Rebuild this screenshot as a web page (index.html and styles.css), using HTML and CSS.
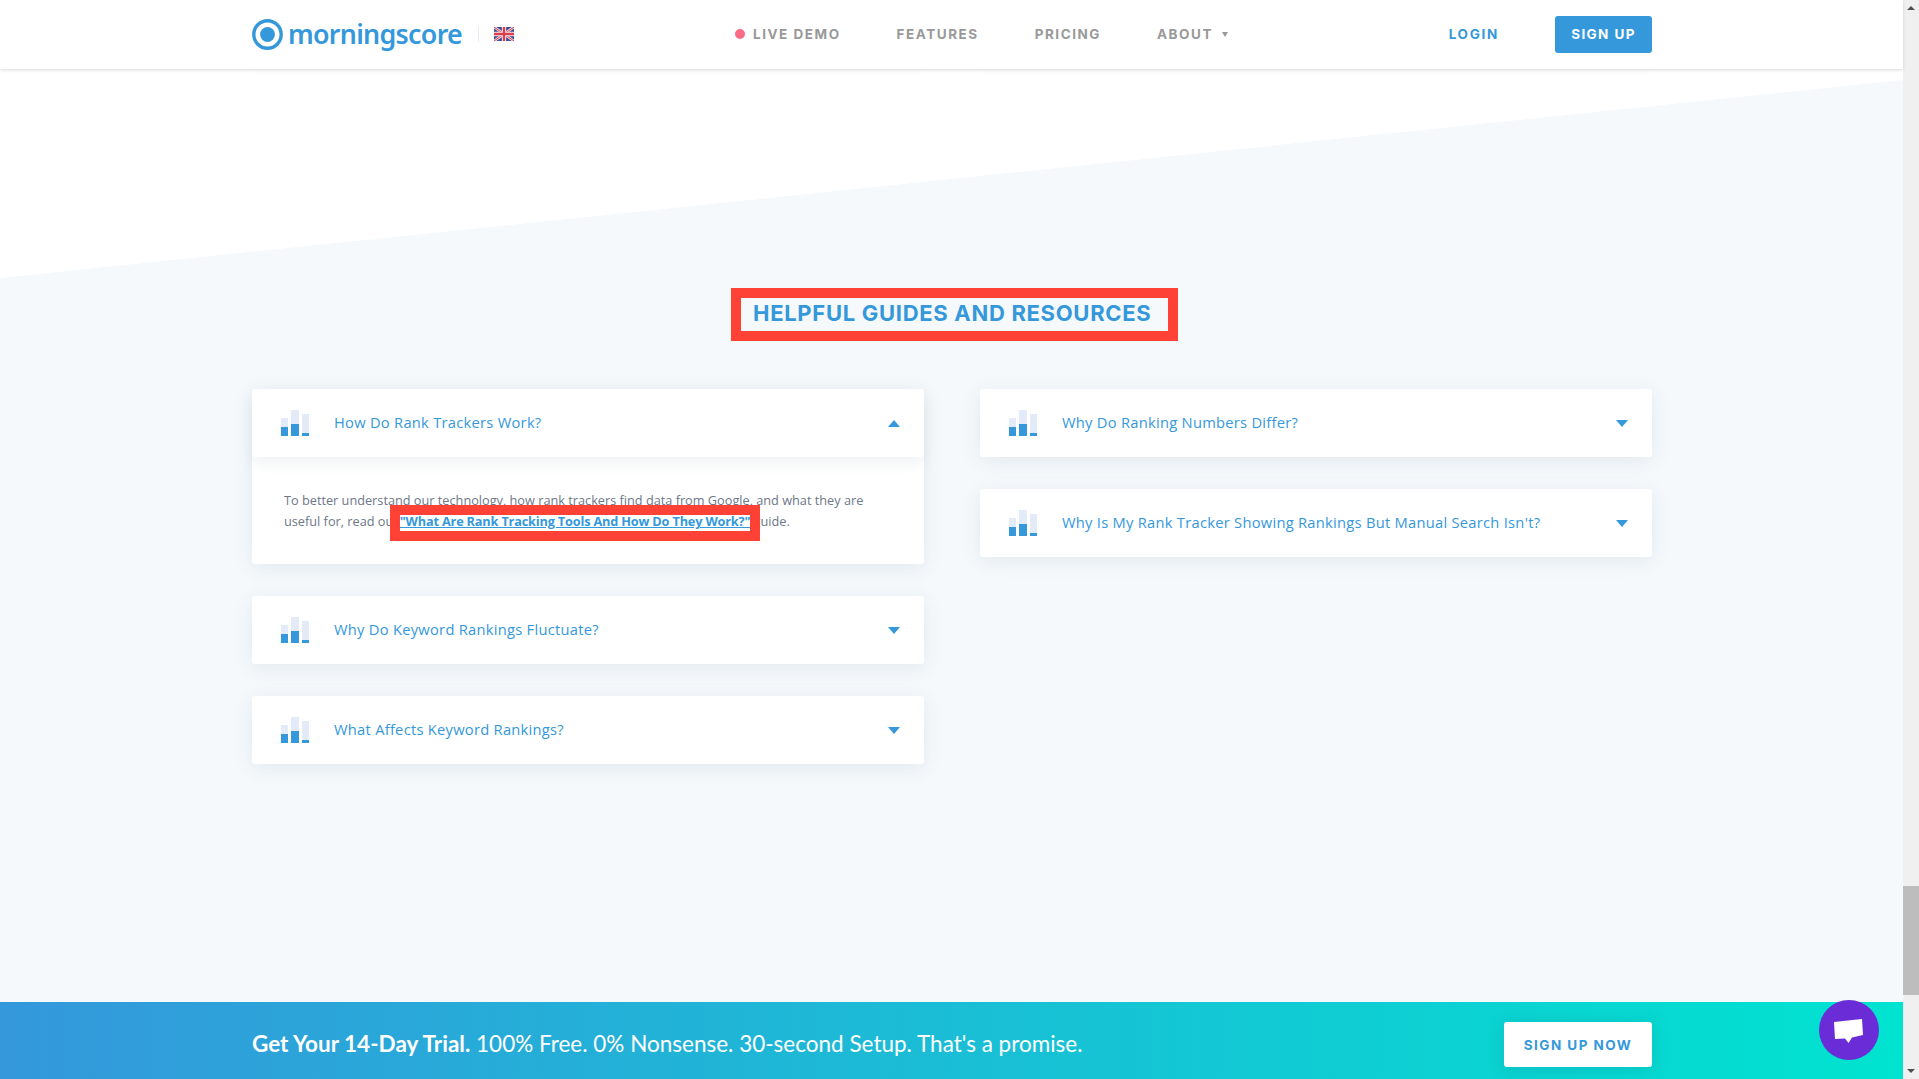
FILE: index.html
```html
<!DOCTYPE html>
<html lang="en">
<head>
<meta charset="utf-8">
<title>Morningscore</title>
<link rel="stylesheet" href="styles.css">
</head>
<body>
<div class="window">
  <div class="viewport">
    <header class="topbar">
      <div class="wrap topbar-in">
        <a class="logo" href="#">
          <svg class="logo-mark" viewBox="0 0 31 31" aria-hidden="true"><circle cx="15.5" cy="15.5" r="13.7" fill="none" stroke="#3498db" stroke-width="3.4"/><circle cx="15.5" cy="15.5" r="7.4" fill="#3498db"/></svg>
          <span class="logo-text">morningscore</span>
        </a>
        <span class="divider"></span>
        <svg class="flag" viewBox="0 0 20 14" aria-hidden="true">
          <rect width="20" height="14" fill="#3f4a94"/>
          <path d="M0 0 20 14M20 0 0 14" stroke="#f3d9e0" stroke-width="2.6"/>
          <path d="M0 0 20 14M20 0 0 14" stroke="#d9414f" stroke-width="1"/>
          <path d="M10 0V14M0 7H20" stroke="#f6e6ea" stroke-width="4.4"/>
          <path d="M10 0V14M0 7H20" stroke="#d9414f" stroke-width="2.4"/>
        </svg>
        <nav class="nav">
          <a class="nav-link live" href="#"><span class="dot"></span>LIVE DEMO</a>
          <a class="nav-link" href="#">FEATURES</a>
          <a class="nav-link" href="#">PRICING</a>
          <a class="nav-link" href="#">ABOUT<span class="caret"></span></a>
        </nav>
        <a class="login" href="#">LOGIN</a>
        <a class="signup" href="#">SIGN UP</a>
      </div>
    </header>

    <main class="main">
      <div class="prev-row wrap"><span></span><span></span></div>
      <div class="wrap content">
        <h2 class="heading">HELPFUL GUIDES AND RESOURCES</h2>
        <div class="columns">
          <div class="col">
            <section class="card">
              <div class="card-head open">
                <svg class="bars" viewBox="0 0 28 26" aria-hidden="true"><path fill="#e3eaf8" d="M0 8h7v18H0zM10 0h8v26h-8zM21 4h7v22h-7z"/><path fill="#3498db" d="M0 17h7v9H0zM10 14h8v12h-8zM21 23h7v3h-7z"/></svg>
                <span class="card-title">How Do Rank Trackers Work?</span>
                <span class="tri up"></span>
              </div>
              <p class="card-body">To better understand our technology, how rank trackers find data from Google, and what they are useful for, read our <a class="guide" href="#">"What Are Rank Tracking Tools And How Do They Work?"</a> guide.</p>
            </section>
            <section class="card">
              <div class="card-head">
                <svg class="bars" viewBox="0 0 28 26" aria-hidden="true"><path fill="#e3eaf8" d="M0 8h7v18H0zM10 0h8v26h-8zM21 4h7v22h-7z"/><path fill="#3498db" d="M0 17h7v9H0zM10 14h8v12h-8zM21 23h7v3h-7z"/></svg>
                <span class="card-title">Why Do Keyword Rankings Fluctuate?</span>
                <span class="tri"></span>
              </div>
            </section>
            <section class="card">
              <div class="card-head">
                <svg class="bars" viewBox="0 0 28 26" aria-hidden="true"><path fill="#e3eaf8" d="M0 8h7v18H0zM10 0h8v26h-8zM21 4h7v22h-7z"/><path fill="#3498db" d="M0 17h7v9H0zM10 14h8v12h-8zM21 23h7v3h-7z"/></svg>
                <span class="card-title">What Affects Keyword Rankings?</span>
                <span class="tri"></span>
              </div>
            </section>
          </div>
          <div class="col">
            <section class="card">
              <div class="card-head">
                <svg class="bars" viewBox="0 0 28 26" aria-hidden="true"><path fill="#e3eaf8" d="M0 8h7v18H0zM10 0h8v26h-8zM21 4h7v22h-7z"/><path fill="#3498db" d="M0 17h7v9H0zM10 14h8v12h-8zM21 23h7v3h-7z"/></svg>
                <span class="card-title">Why Do Ranking Numbers Differ?</span>
                <span class="tri"></span>
              </div>
            </section>
            <section class="card">
              <div class="card-head">
                <svg class="bars" viewBox="0 0 28 26" aria-hidden="true"><path fill="#e3eaf8" d="M0 8h7v18H0zM10 0h8v26h-8zM21 4h7v22h-7z"/><path fill="#3498db" d="M0 17h7v9H0zM10 14h8v12h-8zM21 23h7v3h-7z"/></svg>
                <span class="card-title">Why Is My Rank Tracker Showing Rankings But Manual Search Isn't?</span>
                <span class="tri"></span>
              </div>
            </section>
          </div>
        </div>
      </div>
    </main>

    <footer class="cta">
      <div class="wrap cta-in">
        <p class="cta-text"><strong>Get Your 14-Day Trial.</strong> 100% Free. 0% Nonsense. 30-second Setup. That's a promise.</p>
        <a class="cta-btn" href="#">SIGN UP NOW</a>
      </div>
    </footer>
  </div>

  <div class="scrollbar">
    <span class="sb-arrow sb-up"></span>
    <div class="sb-track"><span class="sb-thumb"></span></div>
    <span class="sb-arrow sb-down"></span>
  </div>

  <button class="chat" type="button" aria-label="Open chat">
    <svg viewBox="0 0 30 26" aria-hidden="true"><path fill="#fff" d="M0 5 28 2 29 18 18 20.500 14.500 26 11 21.500 1 22z"/></svg>
  </button>
</div>
</body>
</html>
```

FILE: styles.css
```css
* { box-sizing: border-box; }
html, body { margin: 0; height: 100%; overflow: hidden; }
body { font-family: "Open Sans", "Liberation Sans", sans-serif; background: #fff; color: #6b7280; }
a { text-decoration: none; color: inherit; }

.window { position: relative; display: flex; height: 1079px; }
.viewport { flex: 1; min-width: 0; display: flex; flex-direction: column; }
.wrap { width: 1400px; margin-left: 252px; }

.topbar { position: relative; z-index: 2; height: 69px; flex: none; background: #fff; box-shadow: 0 1px 3px rgba(60, 70, 80, .2); }
.topbar-in { display: flex; align-items: center; height: 68px; }
.logo { display: flex; align-items: center; gap: 5px; color: #3498db; }
.logo-mark { width: 31px; height: 31px; display: block; }
.logo-text { font-family: "Noto Sans", sans-serif; font-size: 26.800px; font-weight: 600; letter-spacing: -.7px; line-height: 31px; width: 175px; white-space: nowrap; padding-bottom: 2px; }
.divider { width: 1px; height: 16px; background: #e4ebf5; margin-left: 15px; }
.flag { width: 20px; height: 14px; margin-left: 15px; display: block; }

.nav { display: flex; gap: 56px; margin-left: 221px; font: 700 13.500px "Inter", sans-serif; letter-spacing: 1.530px; color: #999; }
.nav-link { display: flex; align-items: center; }
.dot { width: 10px; height: 10px; border-radius: 50%; background: #fb6b87; margin-right: 8px; }
.caret { width: 0; height: 0; margin-left: 9px; border-left: 3px solid transparent; border-right: 3px solid transparent; border-top: 5px solid #999; }
.login { margin-left: auto; font: 700 13.500px "Inter", sans-serif; letter-spacing: 1.700px; color: #3498db; }
.signup { margin-left: 56px; width: 97px; height: 37px; display: flex; align-items: center; justify-content: center; border-radius: 3px; background: #3498db; color: #fff; font: 700 13.500px "Inter", sans-serif; letter-spacing: 1.400px; }

.main { position: relative; flex: 1; min-height: 0; }
.main::before { content: ""; position: absolute; left: 0; right: 0; top: 11px; bottom: 0; background: #f5f9fc; clip-path: polygon(0 198px, 100% 0, 100% 100%, 0 100%); }
.prev-row { position: relative; display: grid; grid-template-columns: 672px 672px; gap: 56px; height: 0; }
.prev-row span { height: 0; box-shadow: 0 2px 8px 1px rgba(40, 70, 100, .06); }
.content { position: relative; padding-top: 219px; display: flex; flex-direction: column; }

.heading { align-self: flex-start; margin: 0 0 48px 479px; width: 447px; height: 53px; border: 10px solid #ff4136; padding-left: 12px; background: #f5f9fc; color: #3498db; font: 700 22px/31px "Inter", sans-serif; letter-spacing: .7px; white-space: nowrap; }

.columns { display: grid; grid-template-columns: 672px 672px; gap: 56px; align-items: start; }
.col { display: flex; flex-direction: column; gap: 32px; }
.card { background: #fff; border-radius: 3px; box-shadow: 0 4px 20px rgba(40, 70, 100, .09); }
.card-head { display: flex; align-items: center; height: 68px; padding: 0 24px 0 29px; border-radius: 3px; }
.card-head.open { box-shadow: 0 6px 14px rgba(40, 70, 100, .07); position: relative; }
.bars { width: 28px; height: 26px; flex: none; }
.card-title { margin-left: 25px; flex: 1; padding-bottom: 2px; color: #3498db; font: 500 14.700px "Open Sans", sans-serif; letter-spacing: .27px; white-space: nowrap; }
.tri { width: 0; height: 0; border-left: 6px solid transparent; border-right: 6px solid transparent; border-top: 7px solid #3498db; }
.tri.up { border-top: 0; border-bottom: 7px solid #3498db; }
.card-body { margin: 0; height: 107px; padding: 33px 32px 0; font: 400 12.730px/21px "Open Sans", sans-serif; color: #6e7787; }
.guide { display: inline-block; height: 16px; line-height: 12px; color: #3498db; font-weight: 700; letter-spacing: -.17px; text-decoration: underline; background: #fff; outline: 10px solid #ff4136; margin-left: -2px; position: relative; }

.cta { flex: none; height: 77px; background: linear-gradient(90deg, #3498db 0%, #00e3d0 100%); }
.cta-in { display: flex; align-items: center; justify-content: space-between; height: 77px; padding-top: 8px; }
.cta-text { margin: 0; padding-bottom: 3px; color: #fff; font: 400 22.500px "Lato", sans-serif; white-space: nowrap; }
.cta-text strong { font-weight: 700; }
.cta-btn { width: 148px; height: 45px; display: flex; align-items: center; justify-content: center; border-radius: 3px; background: #fff; color: #3498db; font: 700 13.500px "Inter", sans-serif; letter-spacing: 1.450px; box-shadow: 0 2px 16px rgba(20, 120, 140, .25); }

.scrollbar { width: 16px; flex: none; background: #f0f0f0; display: flex; flex-direction: column; align-items: center; }
.sb-arrow { width: 0; height: 0; border-left: 4px solid transparent; border-right: 4px solid transparent; margin: 6px 0; flex: none; }
.sb-up { border-bottom: 4px solid #505050; }
.sb-down { border-top: 4px solid #505050; }
.sb-track { flex: 1; width: 100%; display: flex; flex-direction: column; justify-content: flex-end; padding-bottom: 68px; }
.sb-thumb { display: block; height: 109px; background: #bdbdbd; }

.chat { position: absolute; left: 1819px; top: 1000px; width: 60px; height: 60px; padding: 0; border: 0; border-radius: 50%; background: #6a2cd6; display: flex; align-items: center; justify-content: center; }
.chat svg { width: 30px; height: 26px; display: block; }
```
